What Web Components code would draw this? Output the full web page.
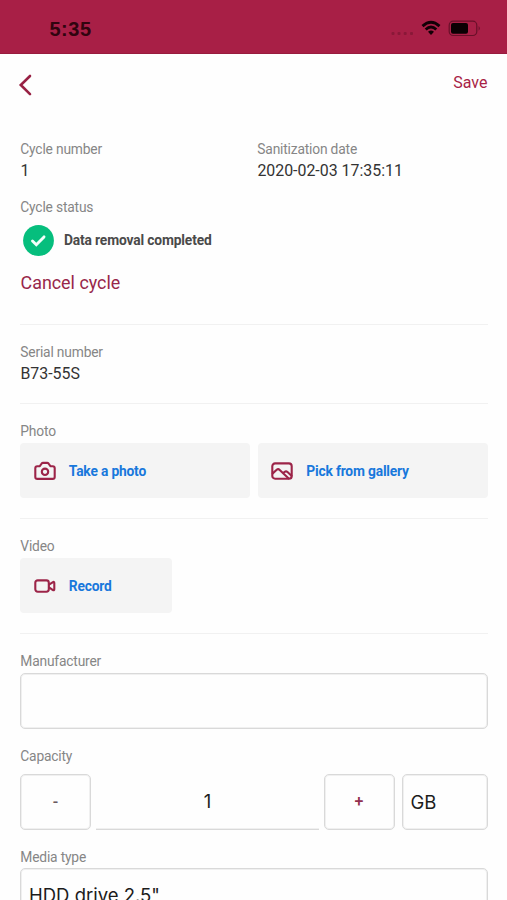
<!DOCTYPE html>
<html lang="en">
<head>
<meta charset="utf-8">
<title>Cycle details</title>
<style>
html,body{margin:0;height:900px;overflow:hidden;background:#fefefe}
body{font-family:Roboto,sans-serif;color:#333;--brand:#a81f46;--line:#d9d9d9;--soft:#f0f0f0}
</style>
</head>
<body>
<cycle-screen></cycle-screen>
<script>
const define = (name, css, html) => customElements.define(name, class extends HTMLElement {
  constructor() {
    super();
    this.attachShadow({ mode: 'open' }).innerHTML = `<style>*{box-sizing:border-box}${css}</style>${html}`;
  }
});

define('status-bar', `
  :host{display:flex;height:54px;box-sizing:border-box;background:var(--brand);padding:0 26px 0 49.5px;justify-content:space-between;color:#30040f;border-bottom:1px solid #981b3e}
  .time{font:bold 20px/24px "Liberation Sans",sans-serif;letter-spacing:.5px;margin-top:16.5px}
  svg{display:block;margin-top:17px}`,
  `<span class="time">5:35</span>
  <svg width="91" height="24" viewBox="390 17 91 24">
    <g fill="#8a1838"><rect x="391.5" y="32" width="3" height="3" rx="1"/><rect x="397.5" y="32" width="3" height="3" rx="1"/><rect x="403.7" y="32" width="3" height="3" rx="1"/><rect x="410" y="32" width="3" height="3" rx="1"/></g>
    <g fill="none" stroke="#120006" stroke-width="2.9"><path d="M422.5 26.1Q431 18.5 439.5 26.1"/><path d="M425.7 29.5Q431 24.7 436.3 29.5"/></g>
    <path d="M428 31.7Q431 29.3 434 31.7L431 35Z" fill="#120006"/>
    <rect x="449.2" y="21.2" width="27.6" height="14.3" rx="4" fill="none" stroke="#681029" stroke-width="1.2"/>
    <rect x="451" y="23" width="17" height="10.7" rx="2" fill="#0a0003"/>
    <path d="M478.7 26Q480.7 28.3 478.7 30.7Z" fill="#5a0d24"/>
  </svg>`);

define('nav-bar', `
  :host{display:flex;height:87.5px;padding:18px 19.5px 0 18px;justify-content:space-between;box-sizing:border-box;color:var(--brand)}
  svg{display:block;margin-top:2px}
  span{font-size:16px;line-height:20px;margin-top:1px}`,
  `<svg width="16" height="24" viewBox="18 74 16 24"><path d="M30 76L20.8 85L30 94.2" fill="none" stroke="#982043" stroke-width="2.6" stroke-linecap="round"/></svg>
  <span><slot></slot></span>`);

define('field-label', `:host{display:block;height:16px;padding-left:.3px;font-size:13.8px;letter-spacing:-.18px;line-height:15px;color:#868686;white-space:nowrap}`, `<slot></slot>`);
define('field-value', `:host{display:block;height:20px;padding-left:.4px;margin-top:3px;font-size:15.9px;line-height:20px;color:#333;white-space:nowrap}`, `<slot></slot>`);
define('section-rule', `:host{display:block;height:1px;background:#f1f1f1}`, ``);

define('status-badge', `
  :host{display:flex;align-items:center;gap:10px;height:31px;padding-left:3px;font-size:13.8px;letter-spacing:-.15px;font-weight:700;color:#4a4a4a}
  svg{display:block}`,
  `<svg width="31" height="31" viewBox="0 0 31 31"><circle cx="15.5" cy="15.5" r="15.4" fill="#06be7d"/><path d="M9.5 16L13.3 19.7L21 11.9" fill="none" stroke="#f3fffa" stroke-width="2.9" stroke-linecap="round"/></svg><span><slot></slot></span>`);

define('text-link', `:host{display:block;height:22px;padding-left:.5px;font-size:17.9px;line-height:22px;color:#98274a}`, `<slot></slot>`);

const shapes = {
  camera: '<path d="M3.3 5.2H5.8L7.7 2.5Q8.2 1.9 9 1.9H13.2Q14 1.9 14.5 2.5L16.4 5.2H18.7Q20.7 5.2 20.7 7.2V15.9Q20.7 17.9 18.7 17.9H3.3Q1.3 17.9 1.3 15.9V7.2Q1.3 5.2 3.3 5.2Z"/><circle cx="11" cy="10.8" r="3.2"/>',
  gallery: '<rect x="1.3" y="2.4" width="19.4" height="15.3" rx="2.8"/><path d="M1.7 12.4L5.7 8.8Q7.2 7.5 8.7 8.9L17.7 17.4M12.2 12.2L13.7 10.8Q15.1 9.8 16.5 11L20.5 14.7"/>',
  video: '<rect x="1.3" y="4.4" width="13.5" height="11.3" rx="2.4"/><path d="M15 8.7L18.6 6.3Q20.3 5.2 20.3 7V13.2Q20.3 15 18.6 13.8L15 11.4"/>'
};
customElements.define('media-button', class extends HTMLElement {
  connectedCallback() {
    this.attachShadow({ mode: 'open' }).innerHTML = `<style>
      :host{display:flex;align-items:center;box-sizing:border-box;height:55px;padding-left:13.5px;gap:13.3px;background:#f4f4f4;border-radius:4px;color:#1878dc;font-size:13.8px;letter-spacing:-.18px;font-weight:700;white-space:nowrap}
      :host([icon=gallery]){padding-left:13px}
      svg{display:block}</style>
      <svg width="22" height="20" viewBox="0 0 22 20" fill="none" stroke="#9c2448" stroke-width="2.1" stroke-linejoin="round" stroke-linecap="round">${shapes[this.getAttribute('icon')]}</svg><span><slot></slot></span>`;
  }
});

define('text-box', `:host{display:flex;align-items:center;box-sizing:border-box;height:55.5px;border:1px solid var(--line);box-shadow:inset 0 0 0 1px var(--soft);border-radius:5px;padding:0 0 1px 8px;font-family:Inter,sans-serif;font-size:18.5px;color:#1c1c1c;white-space:nowrap}`, `<slot></slot>`);
define('step-button', `:host{display:flex;align-items:center;justify-content:center;box-sizing:border-box;height:55.5px;border:1px solid var(--line);box-shadow:inset 0 0 0 1px var(--soft);border-radius:5px;font-size:16px;font-weight:500;color:#92304f}`, `<slot></slot>`);
define('number-line', `:host{display:flex;align-items:center;justify-content:center;box-sizing:border-box;height:55.5px;border-bottom:1px solid var(--line);box-shadow:inset 0 -1px 0 var(--soft);font-family:Inter,sans-serif;font-size:18.5px;color:#1c1c1c}`, `<slot></slot>`);

define('cycle-screen', `
  :host{display:block;height:900px;overflow:hidden}
  main{padding:0 19.5px 0 20px}
  .pair{display:grid;grid-template-columns:237px 1fr}
  .buttons{display:grid;grid-template-columns:230px 229.5px;gap:8px;margin-top:3px}
  .buttons.one{grid-template-columns:151.5px}
  .capacity{display:grid;margin-top:9.5px;grid-template-columns:71px 5px 223px 4.5px 71px 7px 86px}
  .capacity number-line{grid-column:3}
  .capacity .minus{color:#6a5a60}
  .capacity .plus{grid-column:5}
  .capacity text-box{grid-column:7;padding-bottom:0}`,
  `<status-bar></status-bar>
  <nav-bar>Save</nav-bar>
  <main>
    <div class="pair">
      <div><field-label>Cycle number</field-label><field-value>1</field-value></div>
      <div><field-label>Sanitization date</field-label><field-value>2020-02-03 17:35:11</field-value></div>
    </div>
    <field-label style="margin-top:19px">Cycle status</field-label>
    <status-badge style="margin-top:9px">Data removal completed</status-badge>
    <text-link style="margin-top:16.5px">Cancel cycle</text-link>
    <section-rule style="margin-top:30px"></section-rule>
    <field-label style="margin-top:20px">Serial number</field-label>
    <field-value>B73-55S</field-value>
    <section-rule style="margin-top:19px"></section-rule>
    <field-label style="margin-top:20px">Photo</field-label>
    <div class="buttons"><media-button icon="camera">Take a photo</media-button><media-button icon="gallery">Pick from gallery</media-button></div>
    <section-rule style="margin-top:20px"></section-rule>
    <field-label style="margin-top:20px">Video</field-label>
    <div class="buttons one"><media-button icon="video">Record</media-button></div>
    <section-rule style="margin-top:20px"></section-rule>
    <field-label style="margin-top:20px">Manufacturer</field-label>
    <text-box style="margin-top:3px"></text-box>
    <field-label style="margin-top:20px">Capacity</field-label>
    <div class="capacity"><step-button class="minus">-</step-button><number-line>1</number-line><step-button class="plus">+</step-button><text-box>GB</text-box></div>
    <field-label style="margin-top:20px">Media type</field-label>
    <text-box style="margin-top:2.5px">HDD drive 2.5"</text-box>
  </main>`);
</script>
</body>
</html>
